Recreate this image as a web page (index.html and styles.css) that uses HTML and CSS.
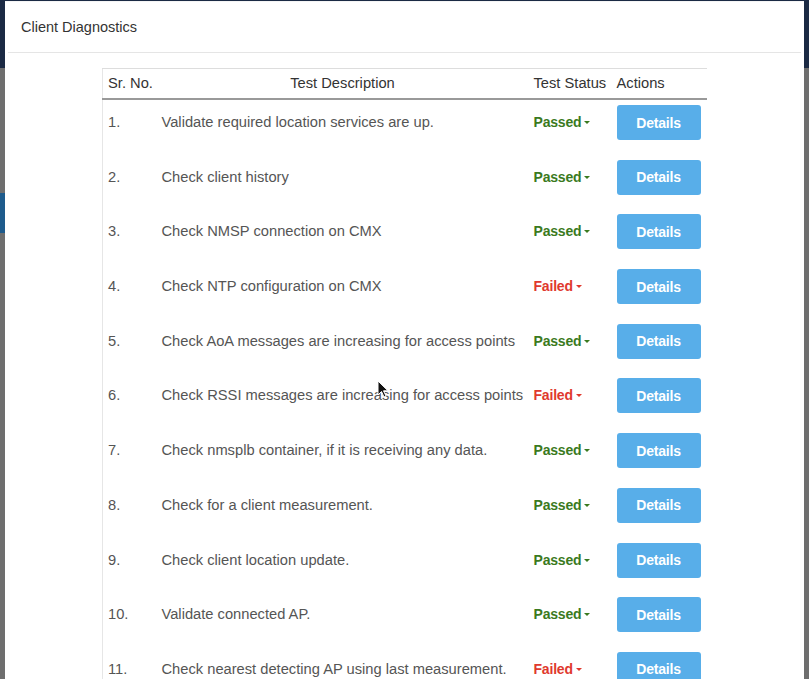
FILE: index.html
```html
<!DOCTYPE html>
<html lang="en">
<head>
<meta charset="utf-8">
<title>Client Diagnostics</title>
<link rel="stylesheet" href="styles.css">
</head>
<body>
<div class="modal">
  <div class="modal-header"><h4 class="modal-title">Client Diagnostics</h4></div>
  <div class="modal-body">
    <table class="diag">
      <colgroup>
        <col class="c-no"><col class="c-desc"><col class="c-status"><col class="c-act">
      </colgroup>
      <thead>
        <tr><th>Sr. No.</th><th class="center">Test Description</th><th>Test Status</th><th>Actions</th></tr>
      </thead>
      <tbody>
        <tr><td>1.</td><td>Validate required location services are up.</td><td><span class="status pass">Passed<i class="caret"></i></span></td><td><button class="btn">Details</button></td></tr>
        <tr><td>2.</td><td>Check client history</td><td><span class="status pass">Passed<i class="caret"></i></span></td><td><button class="btn">Details</button></td></tr>
        <tr><td>3.</td><td>Check NMSP connection on CMX</td><td><span class="status pass">Passed<i class="caret"></i></span></td><td><button class="btn">Details</button></td></tr>
        <tr><td>4.</td><td>Check NTP configuration on CMX</td><td><span class="status fail">Failed<i class="caret"></i></span></td><td><button class="btn">Details</button></td></tr>
        <tr><td>5.</td><td>Check AoA messages are increasing for access points</td><td><span class="status pass">Passed<i class="caret"></i></span></td><td><button class="btn">Details</button></td></tr>
        <tr><td>6.</td><td>Check RSSI messages are increasing for access points</td><td><span class="status fail">Failed<i class="caret"></i></span></td><td><button class="btn">Details</button></td></tr>
        <tr><td>7.</td><td>Check nmsplb container, if it is receiving any data.</td><td><span class="status pass">Passed<i class="caret"></i></span></td><td><button class="btn">Details</button></td></tr>
        <tr><td>8.</td><td>Check for a client measurement.</td><td><span class="status pass">Passed<i class="caret"></i></span></td><td><button class="btn">Details</button></td></tr>
        <tr><td>9.</td><td>Check client location update.</td><td><span class="status pass">Passed<i class="caret"></i></span></td><td><button class="btn">Details</button></td></tr>
        <tr><td>10.</td><td>Validate connected AP.</td><td><span class="status pass">Passed<i class="caret"></i></span></td><td><button class="btn">Details</button></td></tr>
        <tr><td>11.</td><td>Check nearest detecting AP using last measurement.</td><td><span class="status fail">Failed<i class="caret"></i></span></td><td><button class="btn">Details</button></td></tr>
      </tbody>
    </table>
  </div>
</div>
<svg class="cursor" width="12" height="18" viewBox="0 0 12 18"><path d="M1 1 L1 15 L4.5 11.5 L7 17 L9 16 L6.5 10.8 L11 10.8 Z" fill="#111" stroke="#fff" stroke-width="1"/></svg>
</body>
</html>
```

FILE: styles.css
```css
html, body {
  margin: 0;
  height: 100%;
  overflow: hidden;
}
body {
  position: relative;
  padding: 1px 5px 0 5px;
  box-sizing: border-box;
  font-family: "Liberation Sans", Arial, sans-serif;
  background:
    linear-gradient(#1e5b8c, #1e5b8c) left 0 top 193px / 5px 40px no-repeat,
    linear-gradient(#1b2a44, #1b2a44) left top / 100% 68px no-repeat,
    #6e6e6e;
}
.modal {
  background: #fff;
  height: 100%;
  border-top: 1px solid #f5f5f5;
}
.modal-header {
  height: 50px;
  margin: 0 3px;
  padding: 0 13px;
  border-bottom: 1px solid #e5e5e5;
  display: flex;
  align-items: center;
}
.modal-title {
  margin: 0;
  font-size: 14.5px;
  font-weight: normal;
  color: #333;
}
.modal-body {
  padding: 15px 0 0 97px;
}
.diag {
  border-collapse: collapse;
  table-layout: fixed;
  width: 604px;
  border-top: 1px solid #ddd;
  border-left: 1px solid #e6e6e6;
  font-size: 14.7px;
  color: #555;
}
.c-no { width: 54px; }
.c-desc { width: 372px; }
.c-status { width: 83px; }
.c-act { width: 95px; }
.diag th {
  text-align: left;
  font-weight: normal;
  color: #333;
  font-size: 14.7px;
  padding: 6px 5px 6px 5px;
  line-height: 17px;
  white-space: nowrap;
  border-bottom: 2px solid #999;
}
.diag th.center { text-align: center; }
.diag td {
  padding: 5px 5px 14.7px 5px;
  vertical-align: middle;
  line-height: 17px;
  white-space: nowrap;
}
.status {
  display: inline-flex;
  align-items: center;
  font-weight: bold;
  font-size: 14px;
  letter-spacing: -0.2px;
}
.pass { color: #3b7a1e; }
.fail { color: #e0392e; }
.caret {
  display: inline-block;
  margin-left: 3px;
  width: 0;
  height: 0;
  border-left: 3.5px solid transparent;
  border-right: 3.5px solid transparent;
  border-top: 3.5px solid currentColor;
}
.btn {
  display: block;
  width: 84px;
  height: 35px;
  border: none;
  border-radius: 3px;
  background: #58aee9;
  color: #fff;
  font-family: "Liberation Sans", Arial, sans-serif;
  font-weight: bold;
  font-size: 14px;
  letter-spacing: -0.2px;
  padding: 0;
}
.cursor {
  position: absolute;
  left: 377px;
  top: 380px;
}
```
